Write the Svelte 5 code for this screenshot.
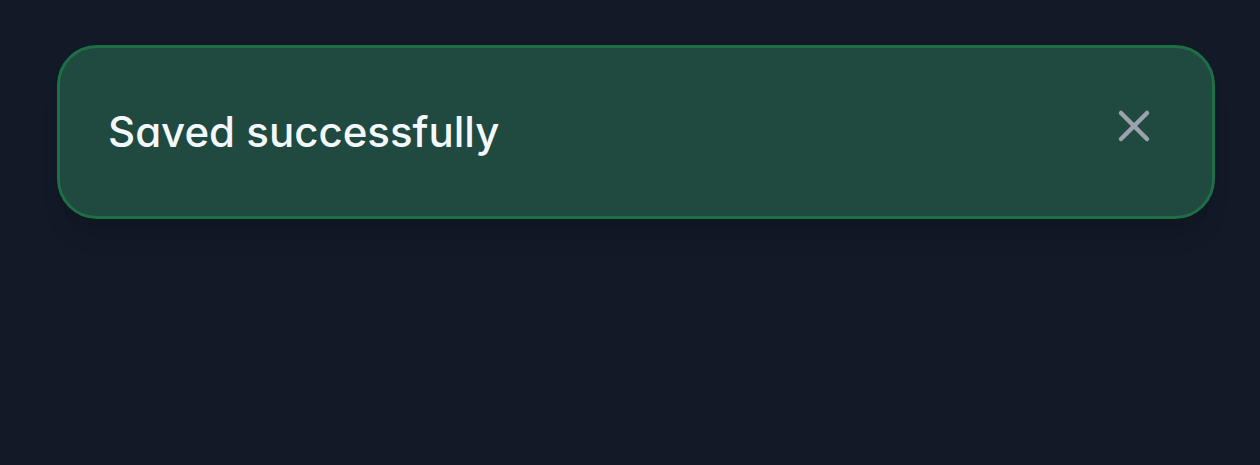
<script>
  let open = $state(true);
</script>

<main>
  {#if open}
    <div class="toast" role="status">
      <p>Saved successfully</p>
      <button type="button" aria-label="Close" onclick={() => (open = false)}>
        <svg viewBox="0 0 48 48" aria-hidden="true">
          <path d="M11 11 37 37M37 11 11 37" />
        </svg>
      </button>
    </div>
  {/if}
</main>

<style>
  :global(body) {
    margin: 0;
    background: #121927;
  }
  main {
    padding: 45px 45px 45px 57px;
    font-family: Inter, "Liberation Sans", sans-serif;
    font-feature-settings: "cv11";
  }
  .toast {
    display: flex;
    justify-content: space-between;
    align-items: flex-start;
    padding: 48px;
    border: 3px solid #1f6f46;
    border-radius: 40px;
    background: #20493f;
    box-shadow: 0 24px 30px -12px rgba(0, 0, 0, 0.1), 0 6px 12px -6px rgba(0, 0, 0, 0.1);
  }
  p {
    margin: 0;
    padding: 8px 0;
    color: #f3f8fc;
    font-size: 42px;
    font-weight: 500;
    line-height: 56px;
  }
  button {
    margin: 6px 6px 0 24px;
    padding: 0;
    border: 0;
    background: none;
    color: #9ca3af;
    cursor: pointer;
  }
  svg {
    display: block;
    width: 48px;
    height: 48px;
    fill: none;
    stroke: currentColor;
    stroke-width: 4.5;
    stroke-linecap: round;
  }
</style>
